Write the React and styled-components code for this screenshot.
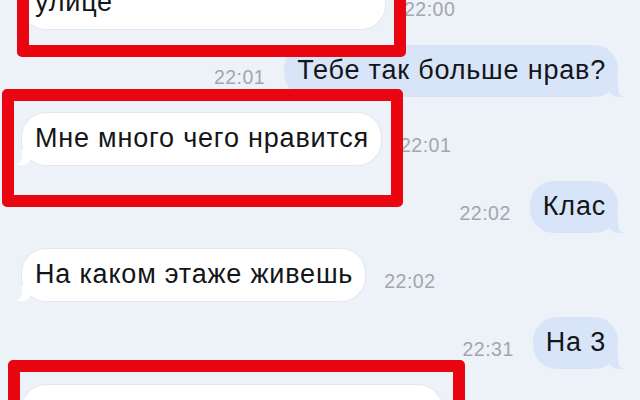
import React from "react";
import styled, { createGlobalStyle } from "styled-components";

const PAGE = "#edf1f8";
const IN_BG = "#ffffff";
const OUT_BG = "#d8e5f8";

const GlobalStyle = createGlobalStyle`
  html, body {
    margin: 0;
    padding: 0;
    background: ${PAGE};
  }
  body {
    font-family: "Liberation Sans", Arial, sans-serif;
    overflow: hidden;
  }
`;

const Screen = styled.div`
  position: relative;
  width: 640px;
  height: 400px;
  overflow: hidden;
  background: ${PAGE};
`;

const Feed = styled.div`
  display: flex;
  flex-direction: column;
  gap: 16px;
  padding: 0 22px;
  margin-top: -51px;
`;

const Row = styled.div`
  display: flex;
  align-items: flex-end;
  gap: 19px;
  justify-content: ${p => (p.$out ? "flex-end" : "flex-start")};
`;

const Time = styled.span`
  font-size: 19.5px;
  line-height: 1;
  color: #a2a6ad;
  margin-bottom: 10px;
  letter-spacing: 0.5px;
`;

const Bubble = styled.div`
  position: relative;
  box-sizing: border-box;
  height: ${p => p.$h || 52}px;
  display: flex;
  align-items: flex-end;
  padding: 0 12px 13px 13px;
  border-radius: 24px;
  font-size: 27px;
  line-height: 1;
  letter-spacing: 0.8px;
  color: #141518;
  background: ${p => (p.$out ? OUT_BG : IN_BG)};
  box-shadow: ${p => (p.$out ? "none" : "0 0 0 1px #e3e7ee")};

  &::before {
    content: "";
    position: absolute;
    bottom: 0;
    ${p => (p.$out ? "right: -5px;" : "left: -5px;")}
    width: 16px;
    height: 16px;
    background: ${p => (p.$out ? OUT_BG : IN_BG)};
    ${p =>
      p.$out
        ? "border-bottom-left-radius: 12px;"
        : "border-bottom-right-radius: 12px;"}
  }
  &::after {
    content: "";
    position: absolute;
    bottom: 0;
    ${p => (p.$out ? "right: -9px;" : "left: -9px;")}
    width: 9px;
    height: 16px;
    background: ${PAGE};
    ${p =>
      p.$out
        ? "border-bottom-left-radius: 8px;"
        : "border-bottom-right-radius: 8px;"}
  }
`;

const Mark = styled.div`
  position: absolute;
  left: ${p => p.$x}px;
  top: ${p => p.$y}px;
  width: ${p => p.$w}px;
  height: ${p => p.$h}px;
  box-sizing: border-box;
  border: 12px solid #ea0610;
  border-radius: 5px;
  pointer-events: none;
`;

const messages = [
  { text: "улице", time: "22:00", h: 80, w: 363 },
  { text: "Тебе так больше нрав?", time: "22:01", out: true },
  { text: "Мне много чего нравится", time: "22:01" },
  { text: "Клас", time: "22:02", out: true },
  { text: "На каком этаже живешь", time: "22:02" },
  { text: "На 3", time: "22:31", out: true },
  { text: "\u00a0", time: "", h: 80, w: 420 }
];

function App() {
  return (
    <Screen>
      <GlobalStyle />
      <Feed>
        {messages.map((m, i) => (
          <Row key={i} $out={m.out}>
            {m.out && <Time>{m.time}</Time>}
            <Bubble $out={m.out} $h={m.h} style={m.w ? { width: m.w } : undefined}>
              {m.text}
            </Bubble>
            {!m.out && m.time && <Time>{m.time}</Time>}
          </Row>
        ))}
      </Feed>
      <Mark $x={17} $y={-30} $w={389} $h={87} />
      <Mark $x={2} $y={89} $w={401} $h={118} />
      <Mark $x={8} $y={360} $w={457} $h={80} />
    </Screen>
  );
}

export default App;
